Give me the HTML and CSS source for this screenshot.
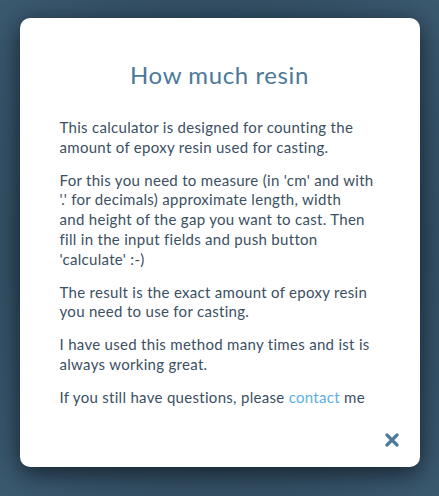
FILE: index.html
```html
<!DOCTYPE html>
<html>
<head>
<meta charset="utf-8">
<link rel="stylesheet" href="styles.css">
</head>
<body>
<div class="backdrop">
  <div class="modal">
    <h1 class="title">How much resin</h1>
    <div class="content">
      <p>This calculator is designed for counting the amount of epoxy resin used for casting.</p>
      <p>For this you need to measure (in 'cm' and with<br>'.' for decimals) approximate length, width<br>and height of the gap you want to cast. Then<br>fill in the input fields and push button<br>'calculate' :-)</p>
      <p>The result is the exact amount of epoxy resin you need to use for casting.</p>
      <p>I have used this method many times and ist is always working great.</p>
      <p>If you still have questions, please <a class="link" href="#">contact</a> me</p>
    </div>
    <div class="footer">
      <svg class="close" width="14" height="14" viewBox="0 0 14 14"><path d="M2 2 L12 12 M12 2 L2 12" stroke="#4f7b9a" stroke-width="3.2" stroke-linecap="round"/></svg>
    </div>
  </div>
</div>
</body>
</html>
```
FILE: styles.css
```css
html, body {
  margin: 0;
  padding: 0;
  height: 100%;
}
body {
  background: radial-gradient(ellipse at 50% 50%, #2c4256 0%, #314a5f 55%, #3b5a70 100%);
  font-family: Lato, "Open Sans", sans-serif;
}
.backdrop {
  padding-top: 18px;
  display: flex;
  justify-content: center;
}
.modal {
  width: 400px;
  height: 449px;
  box-sizing: border-box;
  background: #fff;
  border-radius: 10px;
  box-shadow: 0 6px 24px rgba(10, 20, 30, 0.75);
  padding: 42px 40px 0 40px;
  display: flex;
  flex-direction: column;
}
.title {
  margin: 0 0 28px 0;
  text-align: center;
  font-weight: 400;
  font-size: 24px;
  line-height: 30px;
  letter-spacing: 0.6px;
  color: #4d7999;
}
.content p {
  margin: 0 0 13px 0;
  font-size: 15px;
  line-height: 19.8px;
  letter-spacing: 0.3px;
  color: #3b4f63;
}
.link {
  color: #5ab0e8;
  text-decoration: none;
}
.footer {
  margin-top: auto;
  display: flex;
  justify-content: flex-end;
  padding: 0 0 20px 0;
  margin-right: -19px;
}
.close {
  display: block;
}
```
